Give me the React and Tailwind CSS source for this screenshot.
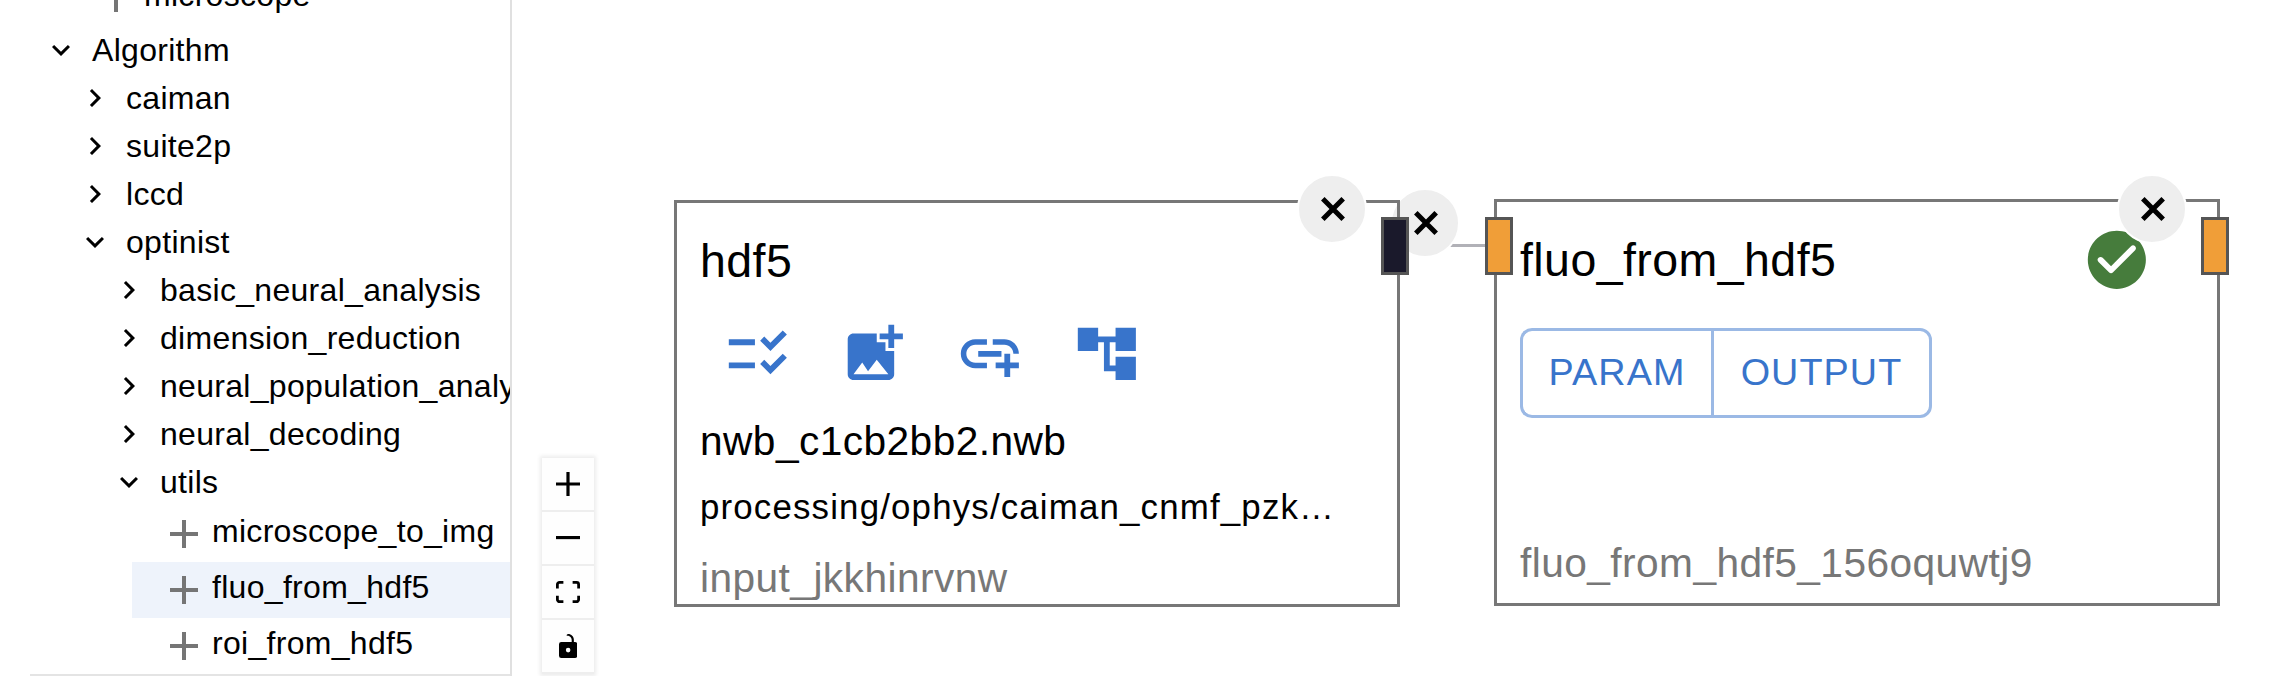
import React from "react";

const CHEVRON_DOWN = "M16.59 8.59L12 13.17 7.41 8.59 6 10l6 6 6-6z";
const CHEVRON_RIGHT = "M10 6 8.59 7.41 13.17 12l-4.58 4.59L10 18l6-6z";

const FOLDERS = [
  { label: "Algorithm", open: true, indent: "pl-[43px]" },
  { label: "caiman", open: false, indent: "pl-[77px]" },
  { label: "suite2p", open: false, indent: "pl-[77px]" },
  { label: "lccd", open: false, indent: "pl-[77px]" },
  { label: "optinist", open: true, indent: "pl-[77px]" },
  { label: "basic_neural_analysis", open: false, indent: "pl-[111px]" },
  { label: "dimension_reduction", open: false, indent: "pl-[111px]" },
  { label: "neural_population_analysis", open: false, indent: "pl-[111px]" },
  { label: "neural_decoding", open: false, indent: "pl-[111px]" },
  { label: "utils", open: true, indent: "pl-[111px]" },
];

function Icon({ d, className }) {
  return (
    <svg viewBox="0 0 24 24" className={className} fill="currentColor">
      <path d={d} />
    </svg>
  );
}

function Folder({ label, open, indent }) {
  return (
    <div className={`flex h-12 shrink-0 items-center ${indent}`}>
      <Icon d={open ? CHEVRON_DOWN : CHEVRON_RIGHT} className="size-9 shrink-0" />
      <span className="ml-[13px] leading-[48px]">{label}</span>
    </div>
  );
}

function Leaf({ label, indent, selected }) {
  return (
    <div className={`flex h-14 shrink-0 items-center ${indent} ${selected ? "bg-[#eef3fb]" : ""}`}>
      <svg viewBox="0 0 28 28" className="size-7 shrink-0" fill="#757575">
        <path d="M12 0h4v12h12v4H16v12h-4V16H0v-4h12z" />
      </svg>
      <span className="mb-[6px] ml-[14px] leading-[48px]">{label}</span>
    </div>
  );
}

function Sidebar() {
  return (
    <aside className="flex h-full w-[512px] shrink-0 flex-col overflow-hidden whitespace-nowrap border-r-2 border-[#e0e0e0] bg-white text-[32px] tracking-[0.3px]">
      <div className="-mt-[30px] flex flex-col">
        <Leaf label="microscope" indent="pl-[102px]" />
        {FOLDERS.map((f) => (
          <Folder key={f.label} {...f} />
        ))}
        <div className="ml-[132px] flex flex-col">
          <Leaf label="microscope_to_img" indent="pl-[38px]" />
          <Leaf label="fluo_from_hdf5" indent="pl-[38px]" selected />
          <Leaf label="roi_from_hdf5" indent="pl-[38px]" />
        </div>
        <div className="ml-[30px] h-0.5 bg-[#e4e4e4]" />
      </div>
    </aside>
  );
}

const CONTROLS = [
  {
    name: "zoom in",
    box: "0 0 32 32",
    size: "h-6 w-6",
    d: "M32 18.133H18.133V32h-4.266V18.133H0v-4.266h13.867V0h4.266v13.867H32z",
  },
  { name: "zoom out", box: "0 0 32 5", size: "h-[3.75px] w-6", d: "M0 0h32v4.2H0z" },
  {
    name: "fit view",
    box: "0 0 32 30",
    size: "h-[22.5px] w-6",
    d: "M3.692 4.63c0-.53.4-.938.939-.938h5.215V0H4.708C2.13 0 0 2.054 0 4.63v5.216h3.692V4.631zM27.354 0h-5.2v3.692h5.17c.53 0 .984.4.984.939v5.215H32V4.631A4.624 4.624 0 0027.354 0zm.954 24.83c0 .532-.4.94-.939.94h-5.215v3.768h5.215c2.577 0 4.631-2.13 4.631-4.707v-5.139h-3.692v5.139zm-23.677.94c-.531 0-.939-.4-.939-.94v-5.138H0v5.139c0 2.577 2.13 4.707 4.708 4.707h5.138V25.77H4.631z",
  },
  {
    name: "lock",
    box: "0 0 25 32",
    size: "h-6 w-[18.75px]",
    d: "M21.333 10.667H19.81V7.619C19.81 3.429 16.38 0 12.19 0c-4.114 1.828-1.37 2.133.305 2.438 1.676.305 4.42 2.59 4.42 5.181v3.048H3.047A3.056 3.056 0 000 13.714v15.238A3.056 3.056 0 003.048 32h18.285a3.056 3.056 0 003.048-3.048V13.714a3.056 3.056 0 00-3.048-3.047zM12.19 24.533a3.056 3.056 0 01-3.047-3.047 3.056 3.056 0 013.047-3.048 3.056 3.056 0 013.048 3.048 3.056 3.056 0 01-3.048 3.047z",
  },
];

function Controls() {
  return (
    <div className="absolute top-[458px] left-[30px] flex w-[52px] flex-col shadow-[0_0_4px_2px_rgba(0,0,0,0.08)]">
      {CONTROLS.map((c) => (
        <button
          key={c.name}
          className="flex h-[54px] items-center justify-center border-b-2 border-[#eee] bg-[#fefefe]"
        >
          <svg viewBox={c.box} className={c.size}>
            <path d={c.d} />
          </svg>
        </button>
      ))}
    </div>
  );
}

function CloseButton({ className }) {
  return (
    <button
      className={`absolute flex size-[70px] items-center justify-center rounded-full border-2 border-white bg-[#eeeeee] ${className}`}
    >
      <svg viewBox="0 0 24 24" className="ml-px size-6" stroke="#000" strokeWidth="5">
        <path d="M1.8 1.8L22.2 22.2M22.2 1.8L1.8 22.2" />
      </svg>
    </button>
  );
}

function Handle({ className }) {
  return <div className={`absolute h-[58px] w-7 border-[3px] border-[#555] ${className}`} />;
}

const INPUT_ACTIONS = [
  "M11 7H2v2h9V7zm0 8H2v2h9v-2zm5.34-4L12.8 7.46l1.41-1.41 2.12 2.12 4.24-4.24L22 5.34 16.34 11zm0 8-3.54-3.54 1.41-1.41 2.12 2.12 4.24-4.24L22 13.34 16.34 19z",
  "M19 7v2.99s-1.99.01-2 0V7h-3s.01-1.99 0-2h3V2h2v3h3v2h-3zm-3 4V8h-3V5H5c-1.1 0-2 .9-2 2v12c0 1.1.9 2 2 2h12c1.1 0 2-.9 2-2v-8h-3zM5 19l3-4 2 3 3-4 4 5H5z",
  "M8 11h8v2H8zm12.1 1H22c0-2.76-2.24-5-5-5h-4v1.9h4c1.71 0 3.1 1.39 3.1 3.1zM3.9 12c0-1.71 1.39-3.1 3.1-3.1h4V7H7c-2.76 0-5 2.24-5 5s2.24 5 5 5h4v-1.9H7c-1.71 0-3.1-1.39-3.1-3.1zM19 12h-2v3h-3v2h3v3h2v-3h3v-2h-3z",
  "M22 11V3h-7v3H9V3H2v8h7V8h2v10h4v3h7v-8h-7v3h-2V8h2v3z",
];

function InputNode() {
  return (
    <section className="absolute top-[200px] left-[162px] h-[407px] w-[726px] border-[3px] border-[#777]">
      <div className="flex flex-col items-start whitespace-nowrap pt-[23px] pl-[23px]">
        <h2 className="text-[46.5px] leading-[70px] tracking-[0.436px]">hdf5</h2>
        <div className="mt-[22.6px] flex h-[70px] gap-[46.5px] pl-[23px] text-[#3874cb]">
          {INPUT_ACTIONS.map((d) => (
            <Icon key={d} d={d} className="size-[69.7px]" />
          ))}
        </div>
        <p className="mt-[23.4px] text-[40.67px] leading-[58px] tracking-[0.436px]">nwb_c1cb2bb2.nwb</p>
        <p className="mt-2 text-[34.86px] leading-[58px] tracking-[1.162px]">
          processing/ophys/caiman_cnmf_pzk…
        </p>
        <p className="mt-[13px] text-[40.67px] leading-[58px] tracking-[0.436px] text-[#777]">input_jkkhinrvnw</p>
      </div>
      <CloseButton className="top-[-29px] left-[620px]" />
      <Handle className="top-[14px] right-[-12px] bg-[#1a192b]" />
    </section>
  );
}

function AlgorithmNode() {
  return (
    <section className="absolute top-[199px] left-[982px] h-[407px] w-[726px] border-[3px] border-[#777]">
      <div className="flex flex-col items-start whitespace-nowrap pt-[23px] pl-[23px]">
        <h2 className="text-[46.5px] leading-[70px] tracking-[0.436px]">fluo_from_hdf5</h2>
        <div className="mt-[33px] flex h-[90px] text-[37.76px] tracking-[1.08px] text-[#3874cb]">
          <button className="w-[191px] rounded-l-xl border-[3px] border-r-0 border-[#9bb9e5] pb-[1px]">PARAM</button>
          <button className="w-[221px] rounded-r-xl border-[3px] border-[#9bb9e5] pb-[1px]">OUTPUT</button>
        </div>
        <p className="mt-[116px] text-[40.67px] leading-[58px] tracking-[0.436px] text-[#777]">
          fluo_from_hdf5_156oquwtj9
        </p>
      </div>
      <Icon
        className="absolute top-[23.2px] left-[585.3px] size-[69.7px] text-[#467c3c]"
        d="M12 2C6.48 2 2 6.48 2 12s4.48 10 10 10 10-4.48 10-10S17.52 2 12 2zM9.29 16.29 5.7 12.7a.9959.9959 0 0 1 0-1.41c.39-.39 1.02-.39 1.41 0L10 14.17l6.88-6.88c.39-.39 1.02-.39 1.41 0 .39.39.39 1.02 0 1.41l-7.59 7.59c-.38.39-1.02.39-1.41 0z"
      />
      <CloseButton className="top-[-28px] left-[620px]" />
      <Handle className="top-[15px] left-[-12px] bg-[#f09e38]" />
      <Handle className="top-[15px] right-[-12px] bg-[#f09e38]" />
    </section>
  );
}

function Canvas() {
  return (
    <main className="relative h-full flex-1 overflow-hidden bg-white">
      <div className="absolute top-[244px] left-[897px] h-[3px] w-[80px] bg-[#b1b1b7]" />
      <CloseButton className="top-[188px] left-[878px]" />
      <InputNode />
      <AlgorithmNode />
      <Controls />
    </main>
  );
}

export default function App() {
  return (
    <div className="flex h-[676px] w-[2270px] overflow-hidden bg-white font-['Liberation_Sans',Arial,sans-serif] text-black">
      <Sidebar />
      <Canvas />
    </div>
  );
}
